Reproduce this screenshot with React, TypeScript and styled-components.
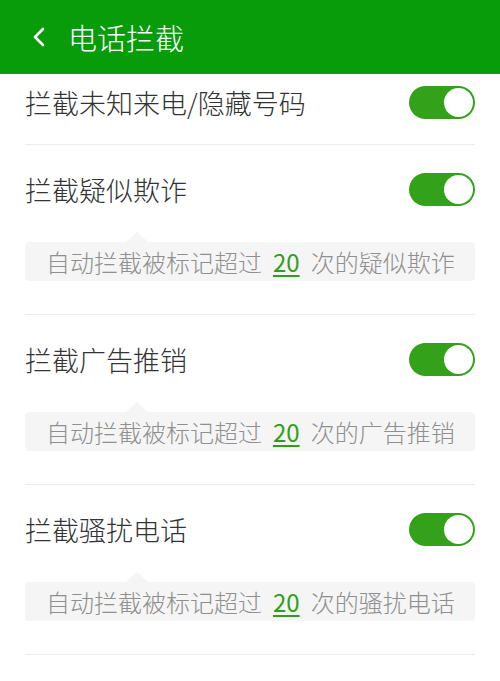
import styled, { createGlobalStyle } from "styled-components";

const GlobalStyle = createGlobalStyle`
  body {
    margin: 0;
    background: #ffffff;
    font-family: "Noto Sans CJK SC", "Noto Sans", sans-serif;
  }
`;

const Page = styled.div`
  width: 500px;
  height: 681px;
  overflow: hidden;
  background: #ffffff;
`;

const Header = styled.header`
  height: 74px;
  background: #089b0a;
  display: flex;
  align-items: center;
  padding-left: 32px;
  gap: 22px;
  box-sizing: border-box;
`;

const Title = styled.h1`
  margin: 0;
  font-size: 29px;
  font-weight: 300;
  color: #ffffff;
  line-height: 1;
`;

const List = styled.div`
  padding: 0 25px;
`;

const Item = styled.div<{ $hint: boolean }>`
  border-bottom: 1px solid #ececec;
  padding-bottom: ${(p) => (p.$hint ? "33px" : "0")};
`;

const Row = styled.div<{ $first: boolean }>`
  height: ${(p) => (p.$first ? "70px" : "88px")};
  padding-bottom: ${(p) => (p.$first ? "14px" : "0")};
  box-sizing: border-box;
  display: flex;
  align-items: center;
  justify-content: space-between;
`;

const Label = styled.span`
  font-size: 27px;
  font-weight: 300;
  color: #333333;
  line-height: 1;
`;

const Switch = styled.div<{ $on: boolean }>`
  position: relative;
  width: 66px;
  height: 33px;
  border-radius: 17px;
  background: ${(p) => (p.$on ? "#33a11a" : "#d9d9d9")};

  &::after {
    content: "";
    position: absolute;
    top: 2px;
    left: ${(p) => (p.$on ? "35px" : "2px")};
    width: 29px;
    height: 29px;
    border-radius: 50%;
    background: #ffffff;
  }
`;

const Hint = styled.div`
  position: relative;
  margin-top: 9px;
  height: 39px;
  background: #f5f5f5;
  border-radius: 4px;
  padding-left: 21px;
  font-size: 24px;
  font-weight: 300;
  line-height: 39px;
  color: #8f8f8f;
  white-space: nowrap;

  &::before {
    content: "";
    position: absolute;
    top: -10px;
    left: 101px;
    border-left: 11px solid transparent;
    border-right: 11px solid transparent;
    border-bottom: 10px solid #f5f5f5;
  }
`;

const Count = styled.span`
  color: #2f9e1a;
  font-weight: 400;
  text-decoration: underline;
  text-underline-offset: 3px;
  margin: 0 11px;
`;

function Chevron() {
  return (
    <svg width="14" height="20" viewBox="0 0 14 20">
      <path
        d="M11 2 L3 10 L11 18"
        fill="none"
        stroke="#ffffff"
        strokeWidth="2.6"
        strokeLinecap="round"
        strokeLinejoin="round"
      />
    </svg>
  );
}

const items = [
  { label: "拦截未知来电/隐藏号码", hint: "" },
  { label: "拦截疑似欺诈", hint: "疑似欺诈" },
  { label: "拦截广告推销", hint: "广告推销" },
  { label: "拦截骚扰电话", hint: "骚扰电话" },
  { label: "拦截响一声电话", hint: "" },
];

function App() {
  return (
    <Page>
      <GlobalStyle />
      <Header>
        <Chevron />
        <Title>电话拦截</Title>
      </Header>
      <List>
        {items.map((item, i) => (
          <Item key={item.label} $hint={!!item.hint}>
            <Row $first={i === 0}>
              <Label>{item.label}</Label>
              <Switch $on />
            </Row>
            {item.hint && (
              <Hint>
                自动拦截被标记超过<Count>20</Count>次的{item.hint}
              </Hint>
            )}
          </Item>
        ))}
      </List>
    </Page>
  );
}

export default App;
